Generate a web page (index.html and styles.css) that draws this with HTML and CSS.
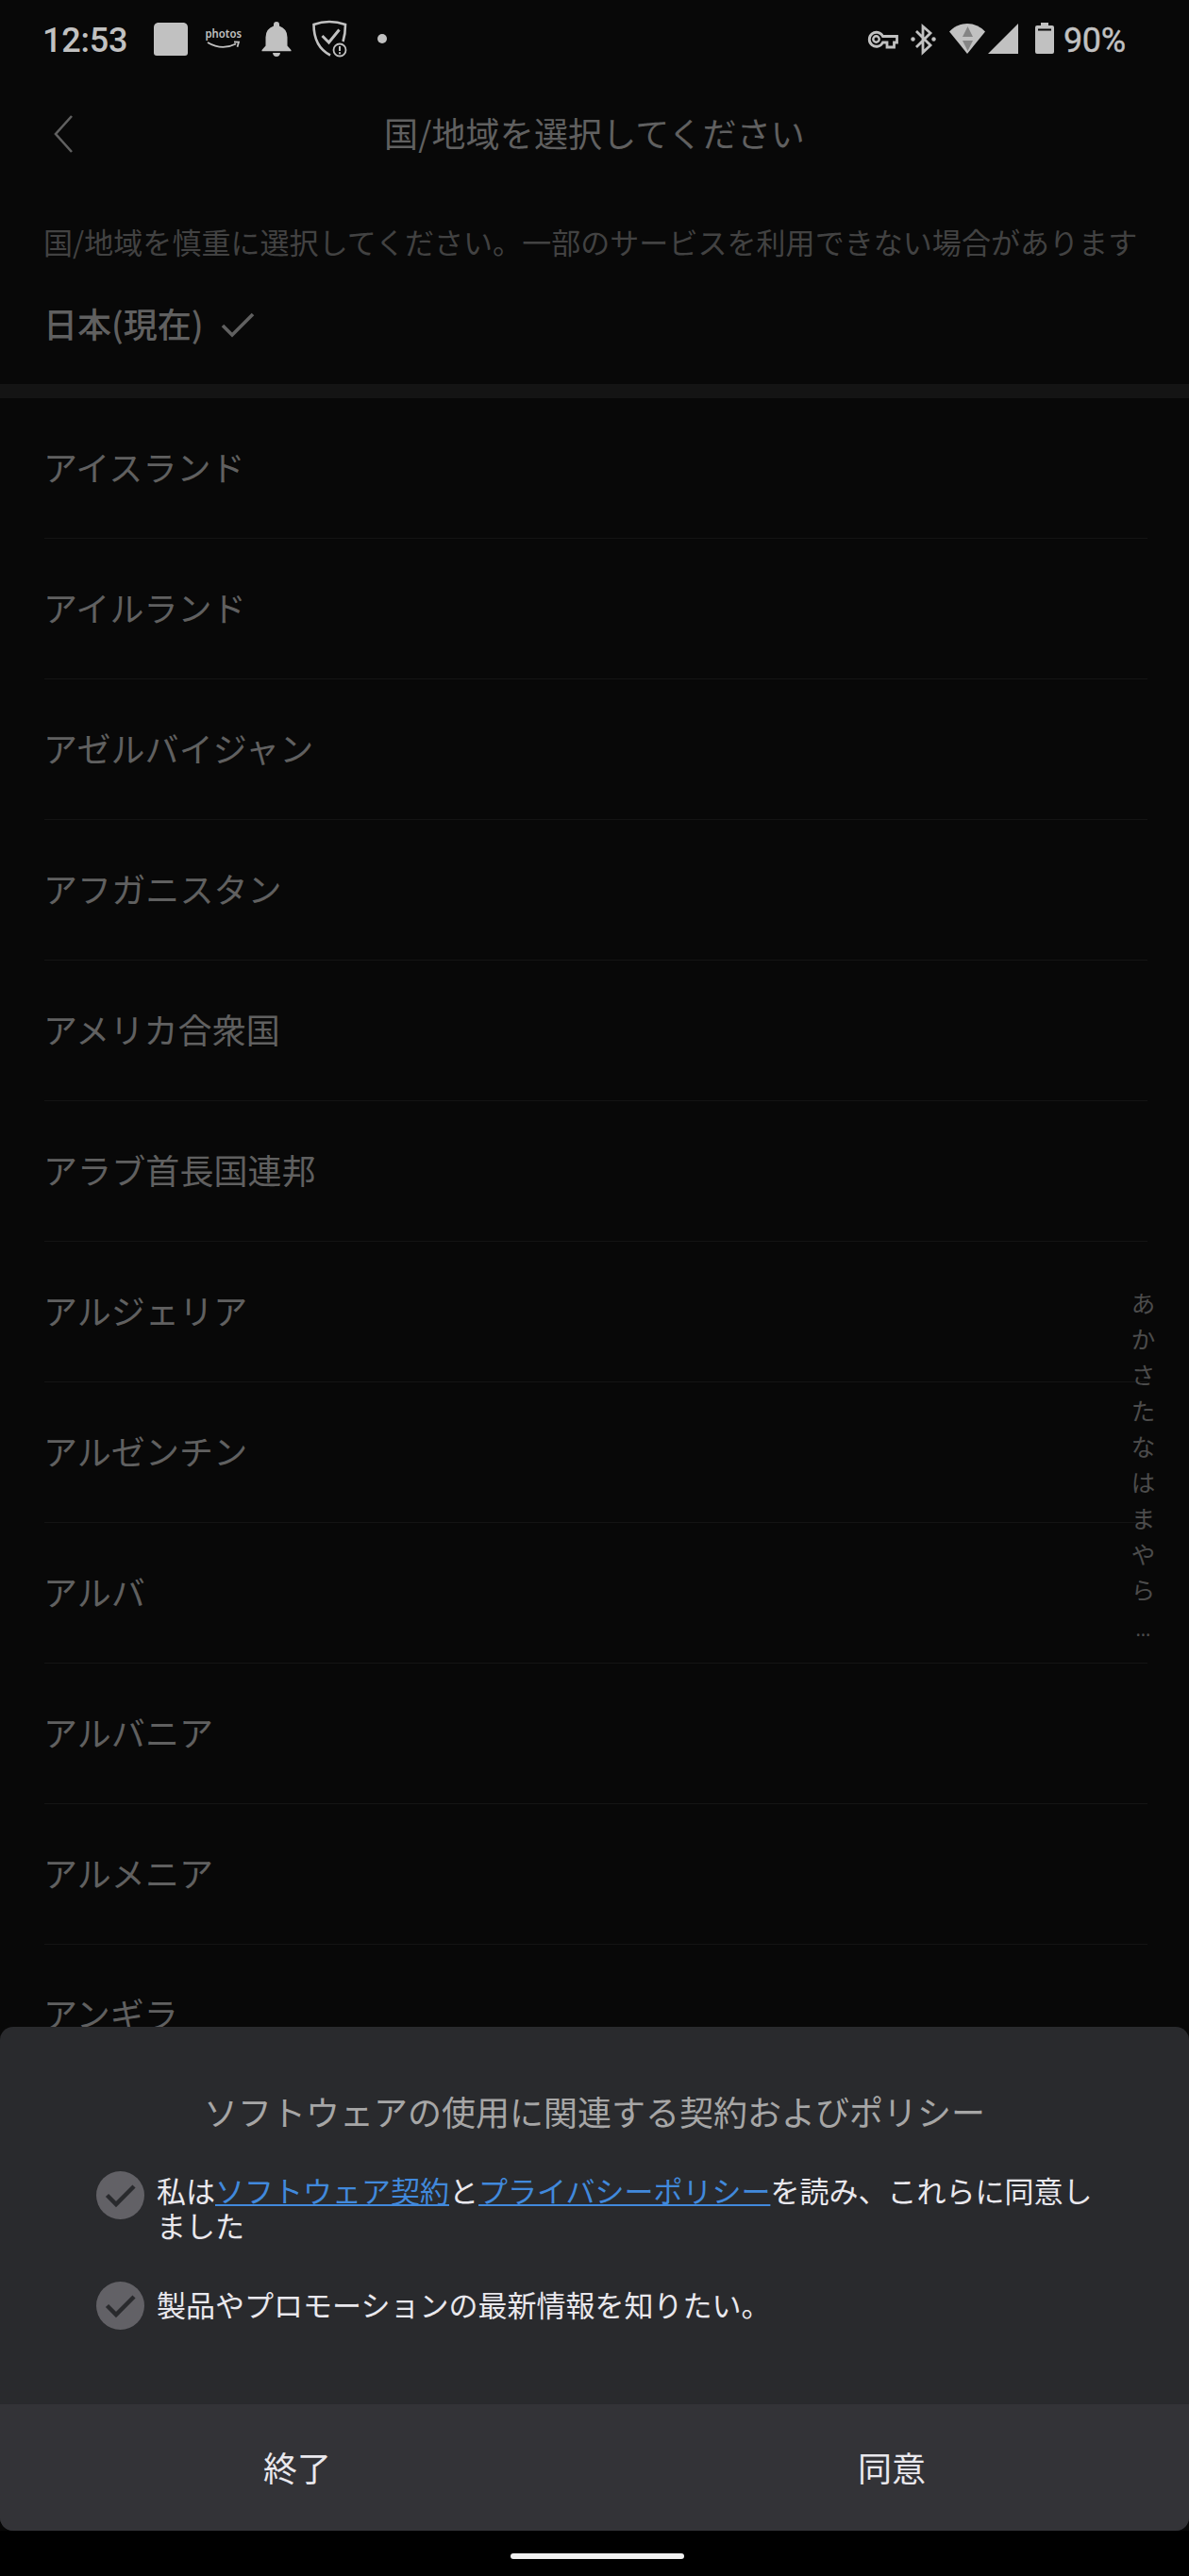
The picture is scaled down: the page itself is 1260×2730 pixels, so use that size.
FILE: index.html
```html
<!DOCTYPE html>
<html lang="ja">
<head>
<meta charset="utf-8">
<title>国/地域を選択してください</title>
<link rel="stylesheet" href="styles.css">
</head>
<body>
<div class="screen">
  <header class="status">
    <span class="clock">12:53</span>
    <svg class="notices" width="256" height="44" viewBox="160 19 256 44">
      <path d="M167 24h28q4 1 4 5v27q0 3-3 3h-30q-3 0-3-3V29q0-4 4-5z"/>
      <text x="217.500" y="40" textLength="38.500" lengthAdjust="spacingAndGlyphs">photos</text>
      <path class="line" d="M220 45q15 9 30 1.500M248 44.500l5 .2-1.500 5" stroke-width="1.800"/>
      <path d="M293 23q3 0 3 3v1.500q8.500 3 8.500 12v9l4 4.500v1.200h-31V53l4-4.500v-9q0-9 8.500-12V26q0-3 3-3zM289 56h8q-.5 4-4 4t-4-4z"/>
      <path class="line" d="M350 58.500q-17.500-9-17.500-32.500 8-3 16.500-3t17 3q0 10-2.500 18" stroke-width="2.600"/>
      <path class="line" d="M341.500 38l7 7 11-13.500" stroke-width="3"/>
      <circle class="line" cx="360" cy="53" r="6.500" stroke-width="1.800"/>
      <path d="M359 49h2v5h-2zM359 55.200h2v2h-2z"/>
      <circle cx="405" cy="41" r="5"/>
    </svg>
    <svg class="system" width="200" height="44" viewBox="918 19 200 44">
      <path class="line" d="M935.500 38.500h15v6.500h-3v5h-7.500v-5h-4.500a7.500 7.500 0 1 1 0-6.500z" stroke-width="2.800"/>
      <circle class="line" cx="928.500" cy="41.500" r="3.200" stroke-width="2.400"/>
      <path class="line" d="M971 33l15 15-8 7.500V28l8 7-15 15" stroke-width="2.800"/>
      <circle cx="967.500" cy="41.500" r="2.200"/><circle cx="989.500" cy="41.500" r="2.200"/>
      <path d="M1006 33.500q8-8.500 19-8.500t19 8.500L1025 57z"/>
      <path class="shade" d="M1025.500 28l5.500 11h-11zM1020 43h11l-5.500 11z"/>
      <path d="M1079 25v32h-32z"/>
      <path fill-rule="evenodd" d="M1103 24h8v3h4q2 0 2 2v26q0 2-2 2h-16q-2 0-2-2V29q0-2 2-2h4zM1100 30.500v2h14v-2z"/>
    </svg>
    <span class="battery">90%</span>
  </header>

  <nav class="titlebar">
    <svg class="back" width="24" height="42" viewBox="0 0 24 42"><path d="M22 2L5 21l17 19"/></svg>
    <h1>国/地域を選択してください</h1>
  </nav>

  <p class="hint">国/地域を慎重に選択してください。一部のサービスを利用できない場合があります</p>
  <div class="current">
    <span>日本(現在)</span>
    <svg width="36" height="28" viewBox="0 0 36 28"><path d="M2 14l10 10L34 2"/></svg>
  </div>

  <ul class="countries">
    <li>アイスランド</li>
    <li>アイルランド</li>
    <li>アゼルバイジャン</li>
    <li>アフガニスタン</li>
    <li>アメリカ合衆国</li>
    <li>アラブ首長国連邦</li>
    <li>アルジェリア</li>
    <li>アルゼンチン</li>
    <li>アルバ</li>
    <li>アルバニア</li>
    <li>アルメニア</li>
    <li>アンギラ</li>
  </ul>

  <div class="index">
    <span>あ</span><span>か</span><span>さ</span><span>た</span><span>な</span><span>は</span><span>ま</span><span>や</span><span>ら</span><span class="more">…</span>
  </div>

  <div class="dock">
    <section class="sheet">
      <div class="sheet-body">
        <h2>ソフトウェアの使用に関連する契約およびポリシー</h2>
        <div class="option terms">
          <svg class="tick" width="51" height="51" viewBox="0 0 51 51"><circle cx="25.500" cy="25.500" r="25.500"/><path d="M11.500 25.500l9.500 9.500 19-19"/></svg>
          <p>私は<a>ソフトウェア契約</a>と<a>プライバシーポリシー</a>を読み、これらに同意し<br>ました</p>
        </div>
        <div class="option">
          <svg class="tick" width="51" height="51" viewBox="0 0 51 51"><circle cx="25.500" cy="25.500" r="25.500"/><path d="M11.500 25.500l9.500 9.500 19-19"/></svg>
          <p>製品やプロモーションの最新情報を知りたい。</p>
        </div>
      </div>
      <div class="actions">
        <button>終了</button>
        <button>同意</button>
      </div>
    </section>
    <div class="home"><i></i></div>
  </div>
</div>
</body>
</html>
```
FILE: styles.css
```css
* { box-sizing: border-box; margin: 0; padding: 0; }
body { background: #000; font-family: "Noto Sans CJK JP", sans-serif; }
.screen {
  position: relative;
  width: 1260px;
  height: 2730px;
  overflow: hidden;
  background: #080808;
  color: #606060;
  font-size: 36px;
}

.status {
  display: flex;
  align-items: center;
  height: 89px;
  padding: 0 67px 7px 45px;
  font-family: Roboto, sans-serif;
  color: #c1c1c1;
}
.status svg { fill: #c1c1c1; }
.status .line { fill: none; stroke: #c1c1c1; }
.status .shade { fill: #858585; }
.status text { font: 600 13px "Noto Sans", sans-serif; }
.clock { width: 115px; font-weight: 500; line-height: 44px; padding-top: 3px; letter-spacing: -.2px; }
.system { margin-left: auto; }
.battery { padding-top: 3px; margin-left: 9px; width: 66px; line-height: 44px; letter-spacing: -.4px; -webkit-text-stroke: .4px currentColor; }

.titlebar {
  display: grid;
  grid-template-columns: 54px 1fr 54px;
  align-items: center;
  height: 106px;
  padding: 0 54px 0 54px;
}
.titlebar h1 { padding-bottom: 4px; font-size: 36px; font-weight: 400; text-align: center; line-height: 52px; letter-spacing: .15px; }
.back path { fill: none; stroke: #606060; stroke-width: 2.600; }

.hint { padding: 38px 0 0 46px; font-size: 31px; line-height: 45px; letter-spacing: .05px; color: #424242; white-space: nowrap; }
.current {
  display: flex;
  align-items: center;
  gap: 18px;
  height: 129px;
  padding: 4px 0 0 46px;
  font-weight: 500;
  line-height: 52px;
}
.current span { padding-bottom: 5px; }
.current path { fill: none; stroke: #606060; stroke-width: 3.600; }

.countries { border-top: 15px solid #141414; list-style: none; }
.countries li {
  height: 149px;
  margin: 0 44px 0 47px;
  padding-bottom: 3px;
  border-bottom: 1px solid #141414;
  line-height: 145px;
  letter-spacing: .1px;
  text-indent: -1px;
}

.index {
  position: absolute;
  top: 1361px;
  right: 29px;
  display: flex;
  flex-direction: column;
  width: 39px;
  font-size: 25.500px;
  line-height: 38px;
  text-align: center;
  color: #4c4c4c;
}
.index .more { padding-top: 5px; font-size: 20px; font-family: "Noto Sans", sans-serif; }

.dock { position: absolute; left: 0; right: 0; bottom: 0; height: 582px; }
.sheet { height: 534px; border-radius: 14px; overflow: hidden; background: #292a2d; }
.sheet-body { height: 400px; padding: 63px 86px 0 102px; }
.sheet h2 { height: 52px; margin-left: -16px; font-size: 36px; font-weight: 400; line-height: 52px; text-align: center; color: #a6a6a6; }
.option { display: flex; gap: 13px; color: #e9e8ed; font-size: 31px; line-height: 37px; }
.option p { white-space: nowrap; padding-top: 5px; }
.terms { height: 117px; margin-top: 38px; }
.terms p { padding-top: 1px; }
.option a { color: #4189dc; text-decoration: underline; text-decoration-thickness: 2px; text-underline-offset: 2px; text-decoration-skip-ink: none; }
.tick { flex: none; }
.tick circle { fill: #626166; }
.tick path { fill: none; stroke: #292a2d; stroke-width: 4.500; }
.actions { display: grid; grid-template-columns: 1fr 1fr; height: 134px; background: #333337; }
.actions button { border: 0; background: none; font: 36px "Noto Sans CJK JP", sans-serif; color: #e9e8ed; padding-bottom: 2px; }
.home { display: flex; justify-content: center; height: 48px; padding: 24px 0 0 6px; background: #000; }
.home i { width: 184px; height: 6px; border-radius: 3px; background: #f0f0f0; }
```
